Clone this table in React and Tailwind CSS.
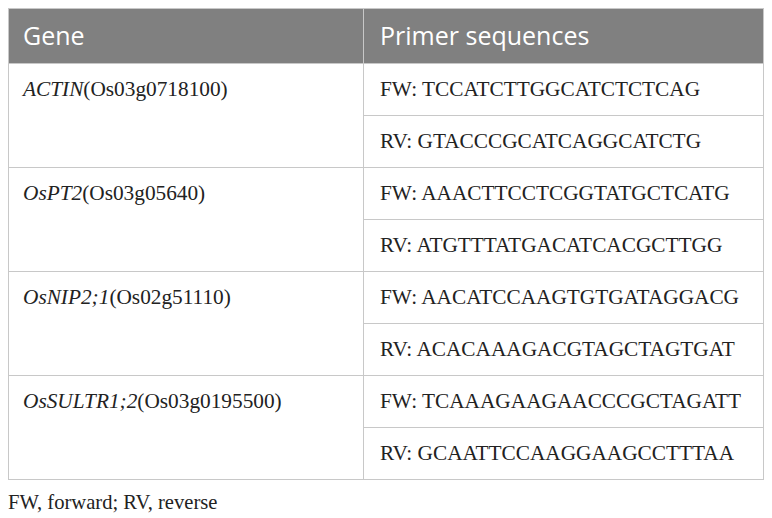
const ROWS = [
  { gene: 'ACTIN', id: '(Os03g0718100)', fw: 'TCCATCTTGGCATCTCTCAG', rv: 'GTACCCGCATCAGGCATCTG' },
  { gene: 'OsPT2', id: '(Os03g05640)', fw: 'AAACTTCCTCGGTATGCTCATG', rv: 'ATGTTTATGACATCACGCTTGG' },
  { gene: 'OsNIP2;1', id: '(Os02g51110)', fw: 'AACATCCAAGTGTGATAGGACG', rv: 'ACACAAAGACGTAGCTAGTGAT' },
  { gene: 'OsSULTR1;2', id: '(Os03g0195500)', fw: 'TCAAAGAAGAACCCGCTAGATT', rv: 'GCAATTCCAAGGAAGCCTTTAA' },
]

const serif = { fontFamily: '"Liberation Serif", "Times New Roman", serif' }

export default function App() {
  return (
    <div className="w-[772px] h-[518px] bg-white pt-2 pl-2">
      <table className="border-collapse w-[755px] table-fixed text-[#222]" style={serif}>
        <colgroup>
          <col className="w-[355px]" />
          <col className="w-[400px]" />
        </colgroup>
        <thead>
          <tr className="h-[55px] bg-[#808080] text-white text-[25px] font-['Open_Sans',sans-serif]">
            <th className="border border-[#c8c8c8] text-left font-normal pl-[14px]">Gene</th>
            <th className="border border-[#c8c8c8] text-left font-normal pl-[16px]">Primer sequences</th>
          </tr>
        </thead>
        <tbody className="text-[21.3px]">
          {ROWS.map(r => (
            <>
              <tr key={r.gene + 'fw'} className="h-[52px]">
                <td rowSpan={2} className="border border-[#c8c8c8] align-top pl-[14px] pt-[10px]">
                  <i>{r.gene}</i>{r.id}
                </td>
                <td className="border border-[#c8c8c8] pl-[16px]">FW: {r.fw}</td>
              </tr>
              <tr key={r.gene + 'rv'} className="h-[52px]">
                <td className="border border-[#c8c8c8] pl-[16px]">RV: {r.rv}</td>
              </tr>
            </>
          ))}
        </tbody>
      </table>
      <p className="mt-[7px] text-[20.6px] text-[#222]" style={serif}>FW, forward; RV, reverse</p>
    </div>
  )
}
